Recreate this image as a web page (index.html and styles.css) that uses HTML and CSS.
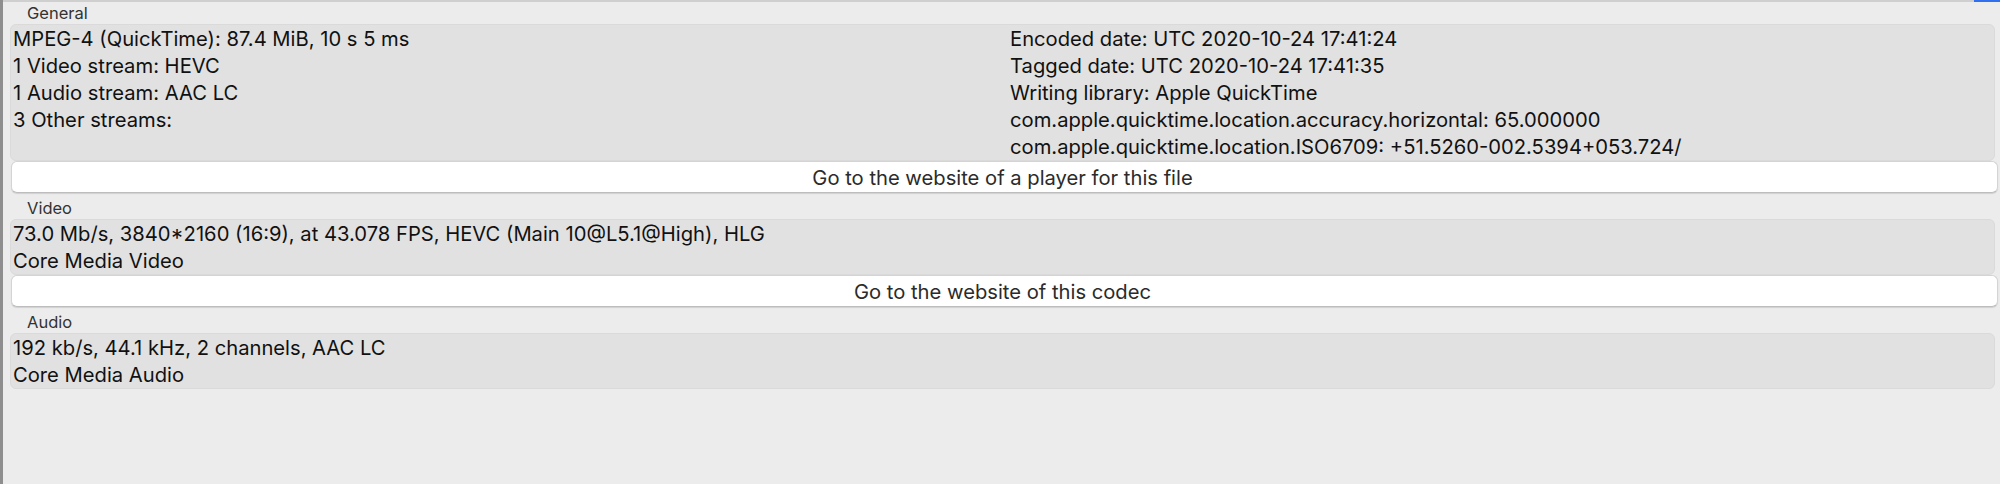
FILE: index.html
```html
<!DOCTYPE html>
<html lang="en">
<head>
  <meta charset="UTF-8" />
  <title>MediaInfo - Easy view</title>
  <link rel="stylesheet" href="styles.css">
</head>
<body>
  <div class="topbar"><span class="tab-mark"></span></div>

  <main class="panel">
    <!-- General -->
    <div class="section-label">General</div>
    <div class="box cols">
      <div class="col">
        <p>MPEG-4 (QuickTime): 87.4 MiB, 10 s 5 ms</p>
        <p>1 Video stream: HEVC</p>
        <p>1 Audio stream: AAC LC</p>
        <p>3 Other streams:</p>
      </div>
      <div class="col">
        <p>Encoded date: UTC 2020-10-24 17:41:24</p>
        <p>Tagged date: UTC 2020-10-24 17:41:35</p>
        <p>Writing library: Apple QuickTime</p>
        <p>com.apple.quicktime.location.accuracy.horizontal: 65.000000</p>
        <p>com.apple.quicktime.location.ISO6709: +51.5260-002.5394+053.724/</p>
      </div>
    </div>
    <button class="link-btn" type="button">Go to the website of a player for this file</button>

    <!-- Video -->
    <div class="section-label">Video</div>
    <div class="box">
      <p>73.0 Mb/s, 3840*2160 (16:9), at 43.078 FPS, HEVC (Main 10@L5.1@High), HLG</p>
      <p>Core Media Video</p>
    </div>
    <button class="link-btn" type="button">Go to the website of this codec</button>

    <!-- Audio -->
    <div class="section-label">Audio</div>
    <div class="box">
      <p>192 kb/s, 44.1 kHz, 2 channels, AAC LC</p>
      <p>Core Media Audio</p>
    </div>
  </main>
</body>
</html>
```

FILE: styles.css
```css
* { margin: 0; padding: 0; box-sizing: border-box; }
html, body { height: 100%; }
body {
  font-family: Inter, "Liberation Sans", sans-serif;
  background: #ececec;
  color: #000;
  border-left: 3px solid #8e8e8e;
  overflow: hidden;
}
.topbar {
  height: 2px;
  background: #cfcfcf;
  display: flex;
  justify-content: flex-end;
}
.tab-mark {
  width: 26px;
  height: 2px;
  background: #2f6ff0;
}

.panel { padding: 0 5px 0 7px; }

.section-label {
  height: 22px;
  padding: 1px 0 0 17px;
  font-size: 16.5px;
  line-height: 20px;
  color: #333;
}
.link-btn + .section-label {
  height: 26px;
  padding-top: 5px;
}

.box {
  background: #e1e1e1;
  border: 1px solid #dadada;
  border-radius: 6px;
  padding: 0 2px;
  font-size: 20.2px;
  line-height: 27px;
}
.box p { color: #111; }
.cols {
  display: grid;
  grid-template-columns: 997px 1fr;
}

.link-btn {
  display: block;
  width: calc(100% + 2px);
  height: 32px;
  margin: 0 0 0 1px;
  padding-right: 4px;
  background: #fff;
  border: 1px solid #d4d4d4;
  border-bottom-color: #bdbdbd;
  border-radius: 6px;
  box-shadow: 0 1px 1px rgba(0, 0, 0, 0.12);
  font-family: inherit;
  font-size: 20.2px;
  color: #2b2b2b;
  text-align: center;
}
```
